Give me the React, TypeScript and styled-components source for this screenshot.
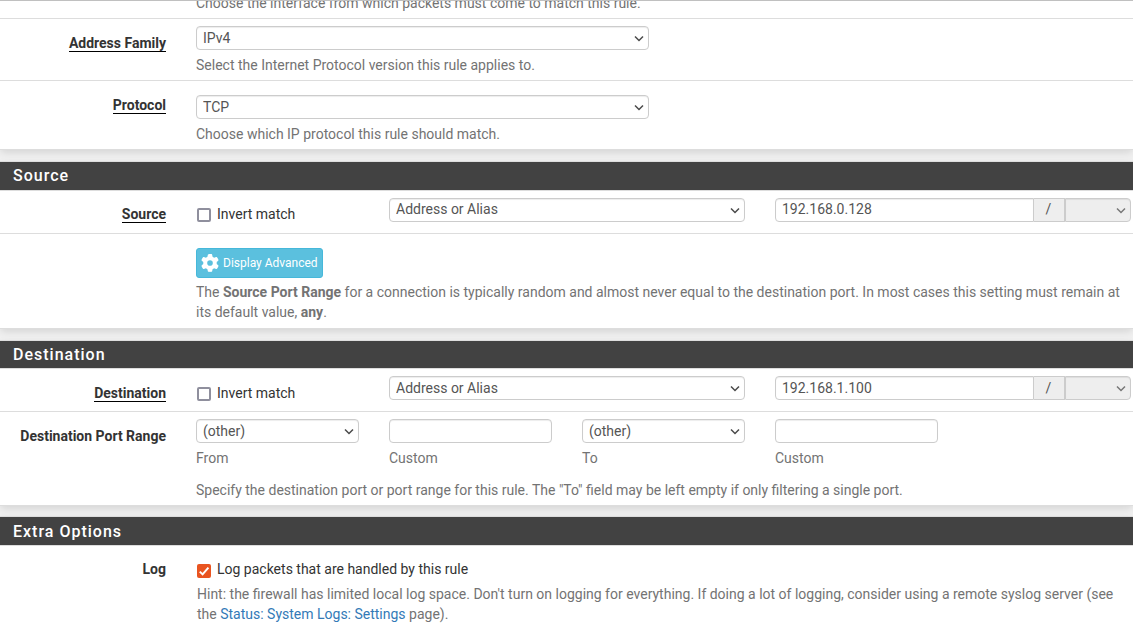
import React from "react";
import styled, { createGlobalStyle } from "styled-components";
import { FaGear } from "react-icons/fa6";

const Global = createGlobalStyle`
  * { box-sizing: border-box; }
  body {
    margin: 0;
    background: #f0f0f0;
    font-family: Roboto, "Liberation Sans", sans-serif;
    font-size: 14px;
    line-height: 20px;
    color: #333;
    overflow: hidden;
  }
`;

const Page = styled.main`
  width: 1133px;
  height: 631px;
  overflow: hidden;
  display: flex;
  flex-direction: column;
  border-top: 1px solid #c0c0c0;
`;

const Panel = styled.section<{ $gap?: number }>`
  flex: none;
  background: #fff;
  border-bottom: 1px solid #ddd;
  margin-bottom: ${(p) => p.$gap ?? 11}px;
  box-shadow: 0 3px 8px -1px rgba(0, 0, 0, 0.13);
`;

const Heading = styled.h2<{ $h: number; $line?: number }>`
  margin: 0;
  height: ${(p) => p.$h + 2}px;
  padding-left: 13px;
  border-top: 1px solid #ddd;
  border-bottom: 1px solid #ddd;
  background: #424242;
  background-clip: padding-box;
  color: #fff;
  font-size: 16px;
  font-weight: 500;
  letter-spacing: 1px;
  line-height: ${(p) => p.$line ?? 27}px;
`;

const Row = styled.div<{ $h: number; $last?: boolean }>`
  height: ${(p) => p.$h}px;
  display: grid;
  grid-template-columns: 166px 935px;
  column-gap: 30px;
  align-items: start;
  border-bottom: ${(p) => (p.$last ? "none" : "1px solid #ddd")};
`;

const Label = styled.div<{ $top?: number }>`
  padding-top: ${(p) => p.$top ?? 14}px;
  text-align: right;
  font-weight: 700;
`;

const Required = styled.span`
  border-bottom: 1px solid #000;
`;

const Content = styled.div<{ $top: number }>`
  padding-top: ${(p) => p.$top}px;
`;

const Fields = styled.div`
  display: grid;
  grid-template-columns: repeat(5, 163px);
  column-gap: 30px;
`;

const Field = styled.div<{ $span?: number }>`
  grid-column: span ${(p) => p.$span ?? 1};
`;

const Help = styled.p<{ $top?: number; $indent?: number }>`
  margin: ${(p) => p.$top ?? 5}px 0 0 ${(p) => p.$indent ?? 0}px;
  color: #737373;
`;

const SelectBox = styled.div<{ $width?: string }>`
  position: relative;
  flex: none;
  width: ${(p) => p.$width ?? "100%"};
  height: 24px;
`;

const Control = styled.input<{ $group?: boolean; $raised?: boolean }>`
  display: block;
  width: 100%;
  min-width: 0;
  height: 24px;
  margin: 0;
  padding: 0 6px ${(p) => (p.$raised ? 2 : 0)}px;
  border: 1px solid #ccc;
  border-radius: ${(p) => (p.$group ? "4px 0 0 4px" : "4px")};
  background: #fff;
  color: #555;
  font: inherit;
  line-height: 20px;
  box-shadow: inset 0 1px 1px rgba(0, 0, 0, 0.075);
  appearance: none;
  outline: none;

  &:disabled {
    background: #eee;
    border-radius: 0 4px 4px 0;
    opacity: 1;
  }
`;

const Chevron = styled.svg<{ $muted?: boolean }>`
  position: absolute;
  right: 5px;
  top: 9px;
  width: 10px;
  height: 8px;
  fill: none;
  stroke: ${(p) => (p.$muted ? "#777" : "#4a4a4a")};
  stroke-width: 1.5;
  pointer-events: none;
`;

const InputGroup = styled.div`
  display: flex;
`;

const Addon = styled.span<{ $raised?: boolean }>`
  flex: none;
  width: 31px;
  height: 24px;
  padding-right: 1px;
  border: solid #ccc;
  border-width: 1px 1px 1px 0;
  background: #eee;
  color: #555;
  line-height: ${(p) => (p.$raised ? 20 : 22)}px;
  text-align: center;
`;

const CheckLabel = styled.label<{ $top?: number }>`
  display: flex;
  align-items: flex-start;
  padding: ${(p) => p.$top ?? 6}px 0 0 1px;
`;

const Check = styled.span<{ $on?: boolean }>`
  flex: none;
  width: 14px;
  height: 14px;
  margin: ${(p) => (p.$on ? 5 : 4)}px 6px 0 0;
  border: ${(p) => (p.$on ? "none" : "2px solid #8f8f9d")};
  border-radius: 2px;
  background: ${(p) => (p.$on ? "#e95420" : "#fff")};

  svg {
    display: block;
    fill: none;
    stroke: #fff;
    stroke-width: 2;
  }
`;

const Button = styled.button`
  display: flex;
  align-items: center;
  gap: 4px;
  width: 127px;
  height: 30px;
  padding: 0 0 0 4px;
  border: 1px solid #46b8da;
  border-radius: 3px;
  background: #5bc0de;
  color: #fff;
  font: 12px/18px Roboto, sans-serif;
  white-space: nowrap;
`;

const Link = styled.a`
  color: #337ab7;
`;

interface SelectProps {
  value: string;
  width?: string;
  disabled?: boolean;
  raised?: boolean;
}

function Select({ value, width, disabled, raised }: SelectProps) {
  return (
    <SelectBox $width={width}>
      <Control as="select" disabled={disabled} defaultValue={value} $raised={raised}>
        <option>{value}</option>
      </Control>
      <Chevron viewBox="0 0 10 8" $muted={disabled}>
        <path d="M1 1.5 L5 5.5 L9 1.5" />
      </Chevron>
    </SelectBox>
  );
}

function Checkbox({ text, on, top }: { text: string; on?: boolean; top?: number }) {
  return (
    <CheckLabel $top={top}>
      <Check $on={on}>
        {on && (
          <svg width="14" height="14" viewBox="0 0 14 14">
            <path d="M2.8 7.6 L5.6 10.4 L11.4 3.6" />
          </svg>
        )}
      </Check>
      {text}
    </CheckLabel>
  );
}

interface AddressRowProps {
  name: string;
  address: string;
  labelTop: number;
  raised?: boolean;
}

function AddressRow({ name, address, labelTop, raised }: AddressRowProps) {
  return (
    <Row $h={43}>
      <Label $top={labelTop}>
        <Required>{name}</Required>
      </Label>
      <Content $top={7}>
        <Fields>
          <Field>
            <Checkbox text="Invert match" top={labelTop - 7} />
          </Field>
          <Field $span={2}>
            <Select value="Address or Alias" raised={raised} />
          </Field>
          <Field $span={2}>
            <InputGroup>
              <Control $group $raised={raised} defaultValue={address} />
              <Addon $raised={raised}>/</Addon>
              <Select value="" width="66px" disabled />
            </InputGroup>
          </Field>
        </Fields>
      </Content>
    </Row>
  );
}

export default function App() {
  return (
    <>
      <Global />
      <Page>
        <Panel>
          <Row $h={18}>
            <span />
            <Help $top={-8}>Choose the interface from which packets must come to match this rule.</Help>
          </Row>
          <Row $h={62}>
            <Label>
              <Required>Address Family</Required>
            </Label>
            <Content $top={7}>
              <Select value="IPv4" width="453px" />
              <Help>Select the Internet Protocol version this rule applies to.</Help>
            </Content>
          </Row>
          <Row $h={68} $last>
            <Label>
              <Required>Protocol</Required>
            </Label>
            <Content $top={14}>
              <Select value="TCP" width="453px" />
              <Help>Choose which IP protocol this rule should match.</Help>
            </Content>
          </Row>
        </Panel>

        <Panel>
          <Heading $h={28}>Source</Heading>
          <AddressRow name="Source" address="192.168.0.128" labelTop={13} raised />
          <Row $h={94} $last>
            <span />
            <Content $top={14}>
              <Button>
                <FaGear size={18} />
                Display Advanced
              </Button>
              <Help $top={4}>
                The <b>Source Port Range</b> for a connection is typically random and almost never equal to the
                destination port. In most cases this setting must remain at its default value, <b>any</b>.
              </Help>
            </Content>
          </Row>
        </Panel>

        <Panel $gap={10}>
          <Heading $h={27}>Destination</Heading>
          <AddressRow name="Destination" address="192.168.1.100" labelTop={14} />
          <Row $h={93} $last>
            <Label>Destination Port Range</Label>
            <Content $top={7}>
              <Fields>
                <Field>
                  <Select value="(other)" />
                  <Help>From</Help>
                </Field>
                <Field>
                  <Control />
                  <Help>Custom</Help>
                </Field>
                <Field>
                  <Select value="(other)" />
                  <Help>To</Help>
                </Field>
                <Field>
                  <Control />
                  <Help>Custom</Help>
                </Field>
              </Fields>
              <Help $top={12}>
                Specify the destination port or port range for this rule. The "To" field may be left empty if only
                filtering a single port.
              </Help>
            </Content>
          </Row>
        </Panel>

        <Panel>
          <Heading $h={28} $line={29}>Extra Options</Heading>
          <Row $h={100} $last>
            <Label $top={13}>Log</Label>
            <Content $top={0}>
              <Checkbox on top={13} text="Log packets that are handled by this rule" />
              <Help $indent={1}>
                Hint: the firewall has limited local log space. Don't turn on logging for everything. If doing a lot
                of logging, consider using a remote syslog server (see the <Link>Status: System Logs: Settings</Link>{" "}
                page).
              </Help>
            </Content>
          </Row>
        </Panel>
      </Page>
    </>
  );
}
